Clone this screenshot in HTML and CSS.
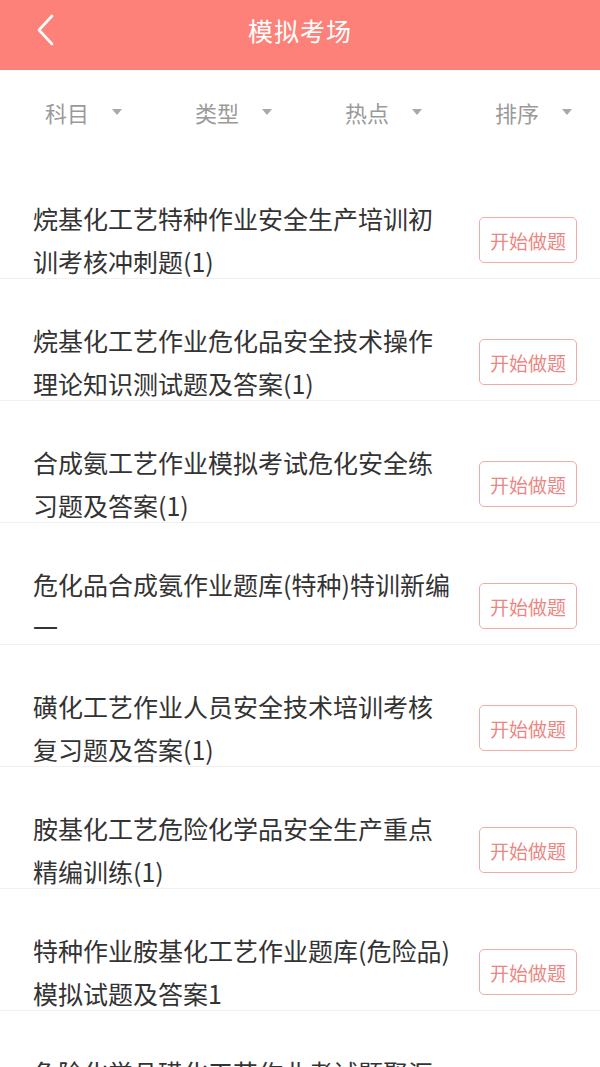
FILE: index.html
```html
<!DOCTYPE html>
<html>
<head>
<meta charset="utf-8">
<title>模拟考场</title>
<link rel="stylesheet" href="styles.css">
</head>
<body>

<div class="topbar">
  <svg class="back" width="20" height="32" viewBox="0 0 20 32"><polyline points="16,2 3,16 16,30" fill="none" stroke="#fff" stroke-width="2.6" stroke-linecap="round" stroke-linejoin="round"/></svg>
  <div class="title">模拟考场</div>
</div>

<div class="filters">
  <div class="filter">科目<span class="tri"></span></div>
  <div class="filter">类型<span class="tri"></span></div>
  <div class="filter">热点<span class="tri"></span></div>
  <div class="filter">排序<span class="tri"></span></div>
</div>

<div class="list">
  <div class="item">
    <div class="name">烷基化工艺特种作业安全生产培训初训考核冲刺题(1)</div>
    <div class="btn">开始做题</div>
  </div>
  <div class="item">
    <div class="name">烷基化工艺作业危化品安全技术操作理论知识测试题及答案(1)</div>
    <div class="btn">开始做题</div>
  </div>
  <div class="item">
    <div class="name">合成氨工艺作业模拟考试危化安全练习题及答案(1)</div>
    <div class="btn">开始做题</div>
  </div>
  <div class="item">
    <div class="name">危化品合成氨作业题库(特种)特训新编一</div>
    <div class="btn">开始做题</div>
  </div>
  <div class="item">
    <div class="name">磺化工艺作业人员安全技术培训考核复习题及答案(1)</div>
    <div class="btn">开始做题</div>
  </div>
  <div class="item">
    <div class="name">胺基化工艺危险化学品安全生产重点精编训练(1)</div>
    <div class="btn">开始做题</div>
  </div>
  <div class="item">
    <div class="name">特种作业胺基化工艺作业题库(危险品)模拟试题及答案1</div>
    <div class="btn">开始做题</div>
  </div>
  <div class="item">
    <div class="name">危险化学品磺化工艺作业考试题聚汇编(1)</div>
    <div class="btn">开始做题</div>
  </div>
</div>

</body>
</html>
```

FILE: styles.css
```css
body {margin:0; background:#fff; font-family:"Noto Sans CJK SC", "Noto Sans", sans-serif; overflow:hidden;}

.topbar {height:70px; background:#fe8179; position:relative; display:flex; justify-content:center; align-items:center; padding-bottom:10px; box-sizing:border-box;}
.topbar .back {position:absolute; left:36px; top:14px;}
.topbar .title {color:#fff; font-size:25px; letter-spacing:1px;}

.filters {height:87px; display:flex; align-items:center;}
.filter {flex:1; padding-left:45px; font-size:22px; color:#9a9a9a; display:flex; align-items:center; margin-top:-3px;}
.tri {width:0; height:0; border-left:5px solid transparent; border-right:5px solid transparent; border-top:6px solid #a8a8a8; margin-left:23px;}

.item {height:122px; box-sizing:border-box; padding:40px 23px 0 33px; border-bottom:1px solid #f1f1f1; display:flex; align-items:flex-start; justify-content:space-between;}
.name {width:420px; font-size:25px; line-height:43px; color:#333;}
.btn {margin-top:20px; width:98px; height:46px; box-sizing:border-box; border:1px solid #f0aaa8; border-radius:5px; color:#ec8683; font-size:19px; display:flex; align-items:center; justify-content:center;}
```
